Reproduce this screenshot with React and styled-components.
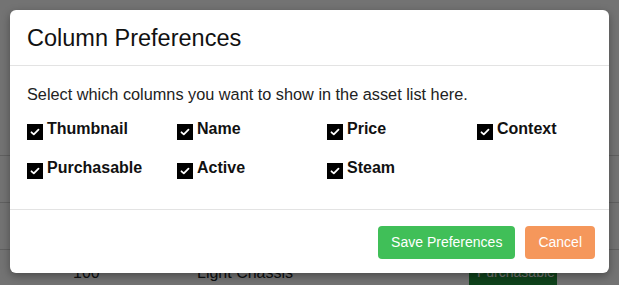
import React, { useState } from "react";
import styled, { createGlobalStyle } from "styled-components";

const GlobalStyle = createGlobalStyle`
  html, body {
    margin: 0;
    padding: 0;
    background: #ffffff;
    font-family: "Liberation Sans", Arial, sans-serif;
  }
`;

const columns = [
  "Thumbnail",
  "Name",
  "Price",
  "Context",
  "Purchasable",
  "Active",
  "Steam",
];

function Check({ on }) {
  return (
    <Box>
      {on && (
        <svg width="10" height="8" viewBox="0 0 10 8">
          <path
            d="M1.5 4.3 L3.8 6.4 L8.5 1.6"
            fill="none"
            stroke="#fff"
            strokeWidth="1.8"
            strokeLinecap="round"
            strokeLinejoin="round"
          />
        </svg>
      )}
    </Box>
  );
}

function App() {
  const [checked, setChecked] = useState(
    columns.reduce((acc, c) => ({ ...acc, [c]: true }), {})
  );

  return (
    <>
      <GlobalStyle />
      <Page>
        <Rows>
          <Row />
          <Row />
          <Row />
          <Row>
            <Cell $w="124px">100</Cell>
            <Cell $w="272px">Light Chassis</Cell>
            <Badge>Purchasable</Badge>
          </Row>
        </Rows>
        <Backdrop />
        <Modal>
          <Header>
            <Title>Column Preferences</Title>
          </Header>
          <Body>
            <Intro>Select which columns you want to show in the asset list here.</Intro>
            <Grid>
              {columns.map((c) => (
                <Option
                  key={c}
                  onClick={() => setChecked({ ...checked, [c]: !checked[c] })}
                >
                  <Check on={checked[c]} />
                  {c}
                </Option>
              ))}
            </Grid>
          </Body>
          <Footer>
            <Button $bg="#40bf58">Save Preferences</Button>
            <Button $bg="#f5975b">Cancel</Button>
          </Footer>
        </Modal>
      </Page>
    </>
  );
}

const Page = styled.div`
  position: relative;
  width: 619px;
  height: 285px;
  overflow: hidden;
`;

const Rows = styled.div`
  display: flex;
  flex-direction: column;
  padding-top: 109px;
`;

const Row = styled.div`
  display: flex;
  align-items: center;
  height: 46px;
  border-bottom: 1px solid #d6d6d6;
  padding-left: 73px;
  font-size: 16px;
  color: #212529;

  &:last-child {
    border-bottom: none;
    align-items: flex-start;
    padding-top: 14px;
  }
`;

const Cell = styled.div`
  width: ${(p) => p.$w};
`;

const Badge = styled.div`
  background: #23933c;
  color: #fff;
  border-radius: 3px;
  padding: 4px 8px;
  width: 72px;
  height: 24px;
  font-size: 14px;
  margin-top: -4px;
`;

const Backdrop = styled.div`
  position: absolute;
  inset: 0;
  background: rgba(0, 0, 0, 0.55);
`;

const Modal = styled.div`
  position: absolute;
  top: 10px;
  left: 10px;
  width: 599px;
  height: 263px;
  background: #fff;
  border-radius: 6px;
  box-shadow: 0 3px 9px rgba(0, 0, 0, 0.35);
  display: flex;
  flex-direction: column;
`;

const Header = styled.div`
  height: 56px;
  box-sizing: border-box;
  padding: 14px 17px;
  border-bottom: 1px solid #e3e3e3;
`;

const Title = styled.h1`
  margin: 0;
  font-size: 23.5px;
  line-height: 28px;
  font-weight: 400;
  color: #111;
`;

const Body = styled.div`
  flex: 1;
  padding: 16px 17px 0;
`;

const Intro = styled.p`
  margin: 0 0 12px;
  font-size: 16.3px;
  line-height: 24px;
  color: #222;
`;

const Grid = styled.div`
  display: grid;
  grid-template-columns: repeat(4, 150px);
  row-gap: 17px;
`;

const Option = styled.label`
  display: flex;
  align-items: flex-start;
  gap: 4px;
  font-size: 16px;
  line-height: 22px;
  font-weight: 700;
  color: #111;
  cursor: pointer;
`;

const Box = styled.span`
  width: 16px;
  height: 16px;
  margin-top: 6px;
  background: #000;
  display: flex;
  align-items: center;
  justify-content: center;
  flex-shrink: 0;
`;

const Footer = styled.div`
  height: 64px;
  box-sizing: border-box;
  border-top: 1px solid #e3e3e3;
  display: flex;
  justify-content: flex-end;
  align-items: center;
  gap: 10px;
  padding: 1px 14px 0;
`;

const Button = styled.button`
  height: 33px;
  padding: 0 13px;
  border: none;
  border-radius: 4px;
  background: ${(p) => p.$bg};
  color: #fff;
  font-family: "Liberation Sans", Arial, sans-serif;
  font-size: 14px;
  cursor: pointer;
`;

export default App;
